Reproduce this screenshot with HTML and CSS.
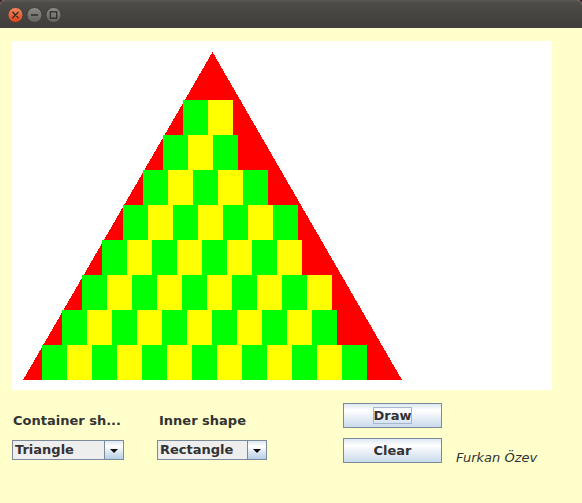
FILE: index.html
```html
<!DOCTYPE html>
<html>
<head>
<meta charset="utf-8">
<link rel="stylesheet" href="styles.css">
</head>
<body>
<div class="window">
  <div class="titlebar">
    <svg class="wm-buttons" width="70" height="28" viewBox="0 0 70 28">
      <defs>
        <linearGradient id="gClose" x1="0" y1="0" x2="0" y2="1">
          <stop offset="0" stop-color="#f48a5f"/>
          <stop offset="1" stop-color="#d9441a"/>
        </linearGradient>
        <linearGradient id="gGray" x1="0" y1="0" x2="0" y2="1">
          <stop offset="0" stop-color="#8c8b86"/>
          <stop offset="1" stop-color="#64635e"/>
        </linearGradient>
      </defs>
      <circle cx="15.5" cy="15" r="7.5" fill="url(#gClose)" stroke="#3a3935" stroke-width="0.8"/>
      <path d="M12.8 12.3 L18.2 17.7 M18.2 12.3 L12.8 17.7" stroke="#3a2a22" stroke-width="1.3" stroke-linecap="round"/>
      <circle cx="34.5" cy="15" r="7.5" fill="url(#gGray)" stroke="#3a3935" stroke-width="0.8"/>
      <path d="M31 15 H38" stroke="#2f2e2b" stroke-width="1.6"/>
      <circle cx="53.5" cy="15" r="7.5" fill="url(#gGray)" stroke="#3a3935" stroke-width="0.8"/>
      <rect x="50.3" y="11.8" width="6.4" height="6.4" fill="none" stroke="#2f2e2b" stroke-width="1.3"/>
    </svg>
  </div>
  <div class="content">
    <div class="canvas">
      <svg class="drawing" width="540" height="349" viewBox="0 0 540 349" shape-rendering="crispEdges">
        <defs>
          <pattern id="cb" width="50" height="35" patternUnits="userSpaceOnUse">
            <rect width="25" height="35" fill="#00ff00"/>
            <rect x="25" width="25" height="35" fill="#ffff00"/>
          </pattern>
        </defs>
        <polygon points="11,339 200.5,11 390,339" fill="#ff0000"/>
        <rect transform="translate(171 59)" width="50" height="35" fill="url(#cb)"/>
        <rect transform="translate(151 94)" width="75" height="35" fill="url(#cb)"/>
        <rect transform="translate(131 129)" width="125" height="35" fill="url(#cb)"/>
        <rect transform="translate(111 164)" width="175" height="35" fill="url(#cb)"/>
        <rect transform="translate(90 199)" width="200" height="35" fill="url(#cb)"/>
        <rect transform="translate(70 234)" width="250" height="35" fill="url(#cb)"/>
        <rect transform="translate(50 269)" width="275" height="35" fill="url(#cb)"/>
        <rect transform="translate(30 304)" width="325" height="35" fill="url(#cb)"/>
      </svg>
    </div>
    <div class="controls">
      <div class="label label-1">Container sh...</div>
      <div class="label label-2">Inner shape</div>
      <button class="btn"><span class="focus">Draw</span></button>
      <div></div>
      <div class="combo combo-1">
        <span class="combo-text">Triangle</span>
        <span class="combo-arrow"><span class="tri"></span></span>
      </div>
      <div class="combo combo-2">
        <span class="combo-text">Rectangle</span>
        <span class="combo-arrow"><span class="tri"></span></span>
      </div>
      <button class="btn">Clear</button>
      <div class="author">Furkan Özev</div>
    </div>
  </div>
</div>
</body>
</html>
```
FILE: styles.css
```css
html, body {
  margin: 0;
  padding: 0;
  background: #3b1a33;
}

.window {
  width: 582px;
  height: 503px;
  background: #ffffcc;
  overflow: hidden;
  border-radius: 5px 5px 0 0;
  font-family: "DejaVu Sans", sans-serif;
  font-size: 13px;
  color: #333333;
}

.titlebar {
  height: 28px;
  background: linear-gradient(#5a5954 0px, #4c4b47 3px, #3f3e3a 28px);
  display: flex;
  align-items: flex-start;
}

.wm-buttons {
  display: block;
}

.content {
  padding: 13px 0 0 12px;
}

.canvas {
  width: 540px;
  height: 349px;
  background: #ffffff;
}

.drawing {
  display: block;
}

.controls {
  margin-top: 13px;
  display: grid;
  grid-template-columns: 145px 186px 99px auto;
  grid-template-rows: 25px 25px;
  row-gap: 10px;
}

.label {
  font-weight: bold;
  line-height: 15px;
  align-self: end;
  white-space: nowrap;
}

.label-1 {
  margin-left: 1px;
}

.label-2 {
  margin-left: 2px;
}

.combo {
  box-sizing: border-box;
  height: 20px;
  margin-top: 2px;
  border: 1px solid #7a8a99;
  display: flex;
  align-self: start;
}

.combo-1 {
  width: 112px;
}

.combo-2 {
  width: 110px;
}

.combo-text {
  flex: 1;
  background: #eeeeee;
  font-weight: bold;
  line-height: 18px;
  padding-left: 2px;
  white-space: nowrap;
}

.combo-arrow {
  box-sizing: border-box;
  width: 19px;
  border-left: 1px solid #7a8a99;
  background: linear-gradient(#dde8f3 0%, #ffffff 30%, #dde8f3 60%, #b8cfe5 100%);
  display: flex;
  align-items: center;
  justify-content: center;
}

.tri {
  width: 0;
  height: 0;
  border-left: 4px solid transparent;
  border-right: 4px solid transparent;
  border-top: 4px solid #111111;
  margin-top: 1px;
}

.btn {
  box-sizing: border-box;
  width: 99px;
  height: 25px;
  margin: 0;
  padding: 0;
  border: 1px solid #7a8a99;
  background: linear-gradient(#dde8f3 0%, #ffffff 28%, #eef3f9 50%, #c9dbec 100%);
  font-family: "DejaVu Sans", sans-serif;
  font-size: 13px;
  font-weight: bold;
  line-height: 15px;
  color: #333333;
}

.focus {
  display: inline-block;
  line-height: 15px;
  outline: 1px solid #a3b8cc;
}

.author {
  font-style: italic;
  line-height: 15px;
  margin-left: 14px;
  margin-top: 12px;
  align-self: start;
  white-space: nowrap;
}
```
